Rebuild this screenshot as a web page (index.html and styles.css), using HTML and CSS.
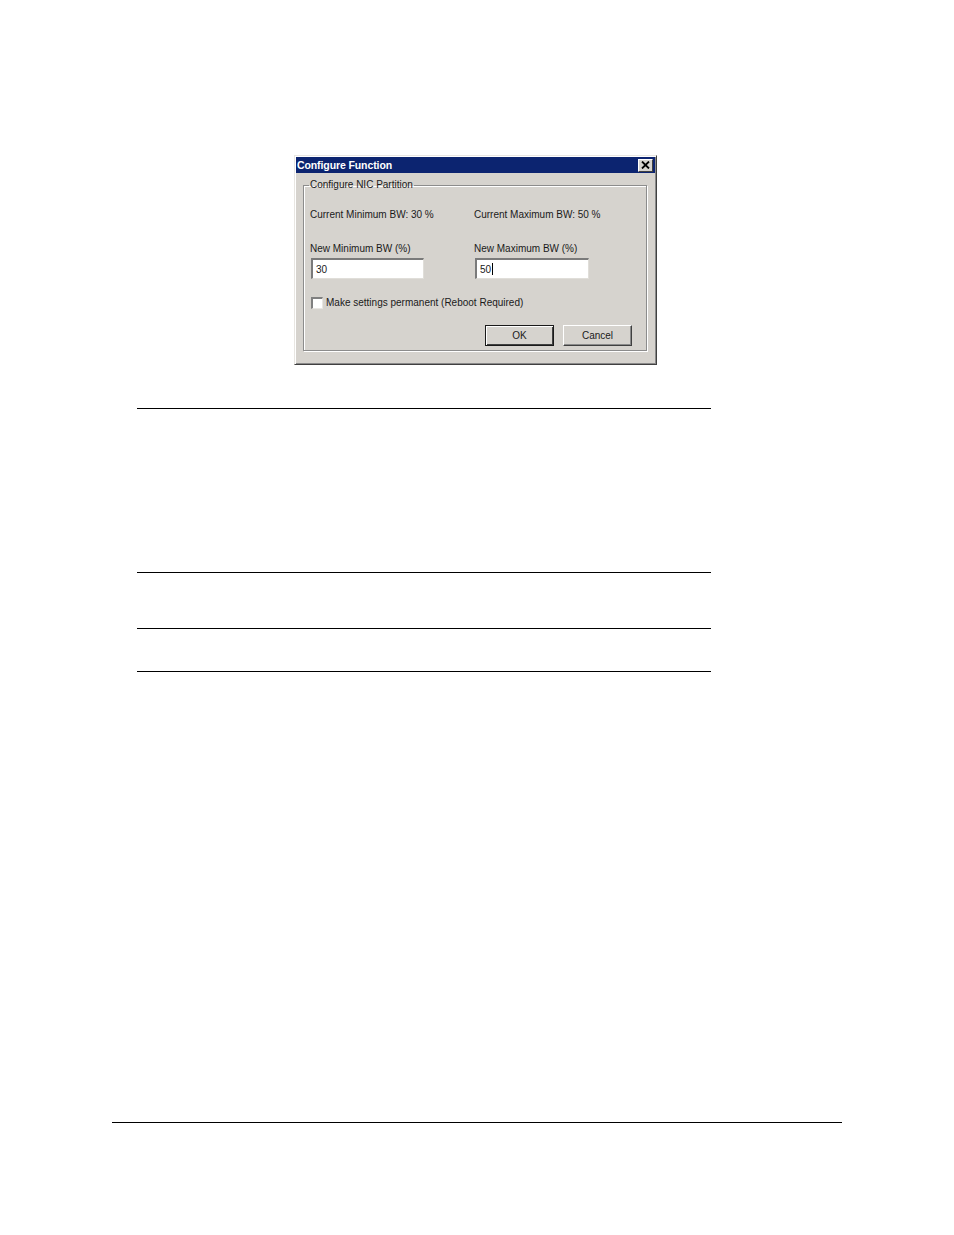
FILE: index.html
```html
<!DOCTYPE html>
<html>
<head>
<meta charset="utf-8">
<link rel="stylesheet" href="styles.css">
</head>
<body>
<div class="page">
  <div class="dialog">
    <div class="titlebar">
      <span class="title">Configure Function</span>
      <span class="close"><svg width="9" height="8" viewBox="0 0 9 8"><path d="M1 0.5 L8 7.5 M8 0.5 L1 7.5" stroke="#000" stroke-width="1.8"/></svg></span>
    </div>
    <fieldset class="group">
      <legend class="legend">Configure NIC Partition</legend>
      <div class="row cur">
        <div class="col">Current Minimum BW: 30 %</div>
        <div class="col">Current Maximum BW: 50 %</div>
      </div>
      <div class="row newl">
        <div class="col">New Minimum BW (%)</div>
        <div class="col">New Maximum BW (%)</div>
      </div>
      <div class="row inputs">
        <div class="col"><div class="input w1">30</div></div>
        <div class="col"><div class="input w2">50<span class="caret"></span></div></div>
      </div>
      <div class="check-row">
        <span class="checkbox"></span>
        <span>Make settings permanent (Reboot Required)</span>
      </div>
      <div class="buttons">
        <div class="btn default"><span class="btn-in">OK</span></div>
        <div class="btn"><span class="btn-in">Cancel</span></div>
      </div>
    </fieldset>
  </div>
  <div class="rules">
    <div class="rule r1"></div>
    <div class="rule r2"></div>
    <div class="rule r3"></div>
    <div class="rule r4"></div>
  </div>
  <div class="footer-rule"></div>
</div>
</body>
</html>
```

FILE: styles.css
```css
html, body {
  margin: 0;
  padding: 0;
  background: #ffffff;
}
.page {
  width: 954px;
  height: 1235px;
  padding-top: 155px;
  box-sizing: border-box;
  font-family: "Liberation Sans", Arial, sans-serif;
}
.dialog {
  margin-left: 294px;
  width: 363px;
  height: 210px;
  box-sizing: border-box;
  background: #d6d3ce;
  border-top: 1px solid #e8e6e2;
  border-left: 1px solid #e8e6e2;
  border-right: 1px solid #404040;
  border-bottom: 1px solid #404040;
  box-shadow: inset 1px 1px 0 #ffffff, inset -1px -1px 0 #8a8a8a;
  padding: 1px 1px 0 1px;
}
.titlebar {
  height: 16px;
  background: #0c2470;
  display: flex;
  align-items: center;
  justify-content: space-between;
  padding: 0 2px 0 1px;
}
.title {
  color: #ffffff;
  font-weight: bold;
  font-size: 10.5px;
  letter-spacing: -0.1px;
  line-height: 16px;
}
.close {
  width: 15px;
  height: 13px;
  box-sizing: border-box;
  background: #d6d3ce;
  border-top: 1px solid #ffffff;
  border-left: 1px solid #ffffff;
  border-right: 1px solid #404040;
  border-bottom: 1px solid #404040;
  display: flex;
  align-items: center;
  justify-content: center;
}
.group {
  margin: 6px 0 0 7px;
  width: 344px;
  height: 172px;
  box-sizing: border-box;
  border: 1px solid #8c8c8c;
  box-shadow: 1px 1px 0 #ffffff, inset 1px 1px 0 #ffffff;
  padding: 18px 8px 0 6px;
  font-size: 10px;
  color: #1a1a1a;
}
.legend {
  padding: 0 1px;
  margin-left: -1px;
  line-height: 12px;
  font-size: 10px;
  color: #1a1a1a;
}
.row {
  display: flex;
  line-height: 12px;
}
.col {
  width: 164px;
}
.newl {
  margin-top: 22px;
}
.inputs {
  margin-top: 3px;
}
.input {
  margin-left: 1px;
  height: 21px;
  box-sizing: border-box;
  background: #ffffff;
  border-top: 2px solid #7a7a7a;
  border-left: 2px solid #7a7a7a;
  border-right: 1px solid #e0ded9;
  border-bottom: 1px solid #e0ded9;
  padding-left: 3px;
  line-height: 17px;
  font-size: 10px;
  display: flex;
  align-items: center;
}
.w1 { width: 113px; }
.w2 { width: 114px; }
.caret {
  display: inline-block;
  width: 0;
  height: 12px;
  border-left: 1px solid #000;
  margin-left: 1px;
}
.check-row {
  margin-top: 17px;
  display: flex;
  align-items: center;
  gap: 3px;
  line-height: 13px;
}
.checkbox {
  margin-left: 1px;
  width: 12px;
  height: 12px;
  box-sizing: border-box;
  background: #ffffff;
  border-top: 2px solid #808080;
  border-left: 2px solid #808080;
  border-right: 1px solid #e8e6e2;
  border-bottom: 1px solid #e8e6e2;
}
.buttons {
  margin-top: 16px;
  display: flex;
  justify-content: flex-end;
  gap: 9px;
  padding-right: 6px;
}
.btn {
  width: 69px;
  height: 21px;
  box-sizing: border-box;
  background: #d6d3ce;
  border-top: 1px solid #ffffff;
  border-left: 1px solid #ffffff;
  border-right: 1px solid #404040;
  border-bottom: 1px solid #404040;
  box-shadow: inset -1px -1px 0 #8a8a8a;
  display: flex;
  align-items: center;
  justify-content: center;
  font-size: 10px;
  color: #1a1a1a;
}
.btn.default {
  border: 1px solid #1a1a1a;
  box-shadow: inset 1px 1px 0 #ffffff, inset -1px -1px 0 #404040;
}
.btn-in {
  line-height: 12px;
}
.rules {
  margin-left: 137px;
  width: 574px;
  margin-top: 43px;
}
.rule {
  height: 0;
  border-top: 1px solid #000000;
}
.r2 { margin-top: 163px; }
.r3 { margin-top: 55px; }
.r4 { margin-top: 42px; }
.footer-rule {
  margin-left: 112px;
  width: 730px;
  margin-top: 450px;
  border-top: 1px solid #000000;
}
```
